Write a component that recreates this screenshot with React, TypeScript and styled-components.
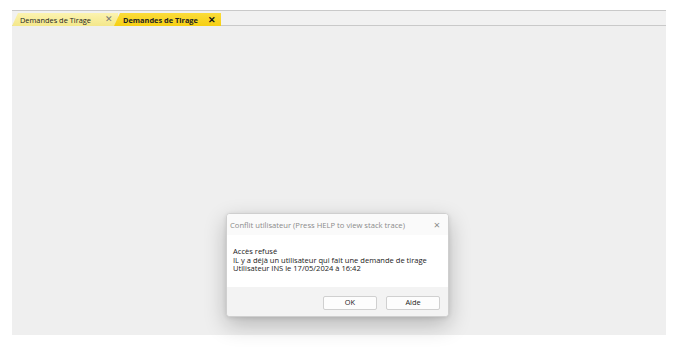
import styled, { createGlobalStyle } from "styled-components";

const GlobalStyle = createGlobalStyle`
  html, body {
    margin: 0;
    background: #ffffff;
  }
  body {
    font-family: "Open Sans", "Noto Sans", sans-serif;
  }
`;

const Page = styled.div`
  width: 688px;
  height: 347px;
  box-sizing: border-box;
  padding: 10px 22px 12px 12px;
  display: flex;
  flex-direction: column;
`;

const TabStrip = styled.div`
  display: flex;
  align-items: flex-end;
  height: 16px;
  box-sizing: border-box;
  border-top: 1px solid #c9c9c9;
  border-bottom: 1px solid #c9c9c9;
  background: #f1f1f1;
`;

const Tab = styled.div<{ $active?: boolean }>`
  position: relative;
  z-index: ${({ $active }) => ($active ? 2 : 1)};
  display: flex;
  align-items: center;
  justify-content: space-between;
  box-sizing: border-box;
  width: ${({ $active }) => ($active ? "107px" : "106px")};
  height: 13px;
  margin-left: ${({ $active }) => ($active ? "-4px" : "0")};
  margin-bottom: -1px;
  padding: 0 ${({ $active }) => ($active ? "5px" : "5px")} 0
    ${({ $active }) => ($active ? "9px" : "8px")};
  clip-path: polygon(6px 0, 100% 0, 100% 100%, 0 100%);
  background: ${({ $active }) =>
    $active
      ? "linear-gradient(#fbdc3a, #f6cf12)"
      : "linear-gradient(#fbf3b0, #f4e78a)"};
  font-family: "Open Sans", "Noto Sans", sans-serif;
  font-size: 7.4px;
  font-weight: ${({ $active }) => ($active ? 700 : 400)};
  color: #222;
  white-space: nowrap;
`;

const TabClose = styled.span<{ $active?: boolean }>`
  font-size: ${({ $active }) => ($active ? "9px" : "8.5px")};
  font-weight: ${({ $active }) => ($active ? 700 : 400)};
  color: ${({ $active }) => ($active ? "#111" : "#777")};
  line-height: 1;
`;

const Workspace = styled.div`
  flex: 1;
  background: #efefef;
  display: flex;
  flex-direction: column;
  justify-content: flex-end;
  align-items: center;
  padding: 0 3px 18px 0;
`;

const Dialog = styled.div`
  width: 223px;
  height: 104px;
  box-sizing: border-box;
  display: flex;
  flex-direction: column;
  background: #ffffff;
  border: 1px solid #cfcfcf;
  border-radius: 4px;
  overflow: hidden;
  box-shadow: 0 8px 22px rgba(0, 0, 0, 0.24), 0 1px 4px rgba(0, 0, 0, 0.1);
  font-family: "Open Sans", "Noto Sans", sans-serif;
`;

const TitleBar = styled.div`
  height: 21px;
  display: flex;
  align-items: center;
  justify-content: space-between;
  padding: 0 8px 0 3px;
  background: #fafafa;
  color: #8a8a8a;
  font-size: 7.65px;
  white-space: nowrap;
`;

const CloseGlyph = styled.span`
  font-size: 11px;
  color: #8a8a8a;
  line-height: 1;
`;

const Body = styled.div`
  height: 52px;
  box-sizing: border-box;
  padding: 12px 6px 0;
  background: #ffffff;
  color: #1a1a1a;
  font-size: 7.55px;
  line-height: 8.5px;
`;

const Footer = styled.div`
  flex: 1;
  display: flex;
  justify-content: flex-end;
  align-items: flex-start;
  gap: 9px;
  padding: 9px 8px 0 0;
  background: #f3f3f3;
`;

const Button = styled.button`
  width: 54px;
  height: 14px;
  padding: 0;
  background: #fdfdfd;
  border: 1px solid #d0d0d0;
  border-radius: 2px;
  font-family: "Open Sans", "Noto Sans", sans-serif;
  font-size: 7.4px;
  color: #1a1a1a;
  line-height: 1;
`;

export default function App() {
  return (
    <>
      <GlobalStyle />
      <Page>
        <TabStrip>
          <Tab>
            Demandes de Tirage
            <TabClose>✕</TabClose>
          </Tab>
          <Tab $active>
            Demandes de Tirage
            <TabClose $active>✕</TabClose>
          </Tab>
        </TabStrip>
        <Workspace>
          <Dialog>
            <TitleBar>
              Conflit utilisateur (Press HELP to view stack trace)
              <CloseGlyph>×</CloseGlyph>
            </TitleBar>
            <Body>
              <div>Accès refusé</div>
              <div>IL y a déjà un utilisateur qui fait une demande de tirage</div>
              <div>Utilisateur INS le 17/05/2024 à 16:42</div>
            </Body>
            <Footer>
              <Button>OK</Button>
              <Button>Aide</Button>
            </Footer>
          </Dialog>
        </Workspace>
      </Page>
    </>
  );
}
